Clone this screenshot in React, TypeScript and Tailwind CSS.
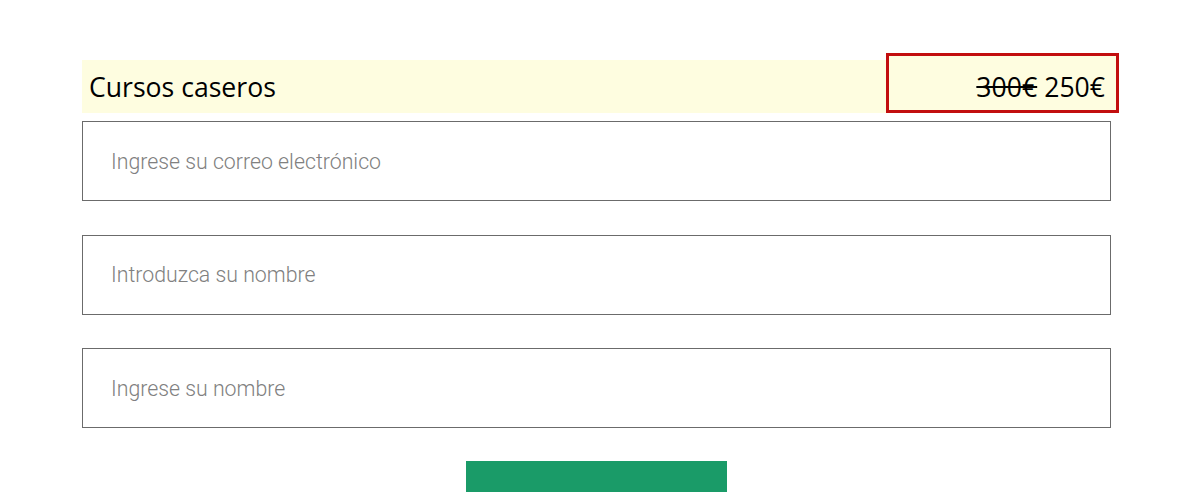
import React from "react";

export default function App() {
  const fields = [
    "Ingrese su correo electrónico",
    "Introduzca su nombre",
    "Ingrese su nombre",
  ];
  return (
    <div className="w-[1200px] h-[492px] overflow-hidden bg-white">
      <div className="ml-[82px] w-[1029px] pt-[60px]">
        <div
          className="flex h-[53px] items-end justify-between bg-[#fefde0]"
          style={{ fontFamily: '"Open Sans", sans-serif' }}
        >
          <div className="self-center pl-[7px] text-[26.6px] leading-[36px] text-black">
            Cursos caseros
          </div>
          <div className="-mr-[8px] flex h-[60px] w-[233px] items-center justify-end border-[3px] border-[#c20e0e] bg-[#fefde0] pr-[11px] pt-[7px] text-[26.6px] leading-[36px] text-black">
            <span className="line-through">300€</span>
            <span className="ml-[7px]">250€</span>
          </div>
        </div>
        <div className="mt-[8px] flex flex-col gap-[33.5px]">
          {fields.map((f) => (
            <input
              key={f}
              placeholder={f}
              className="h-[80px] w-full border border-[#6b6b6b] bg-white pl-[28px] text-[21.3px] font-light text-[#333] placeholder:text-[#808080] outline-none"
              style={{ fontFamily: 'Roboto, sans-serif' }}
            />
          ))}
        </div>
        <div className="mt-[33px] flex justify-center">
          <button className="h-[50px] w-[261px] bg-[#1a9b68]" />
        </div>
      </div>
    </div>
  );
}
